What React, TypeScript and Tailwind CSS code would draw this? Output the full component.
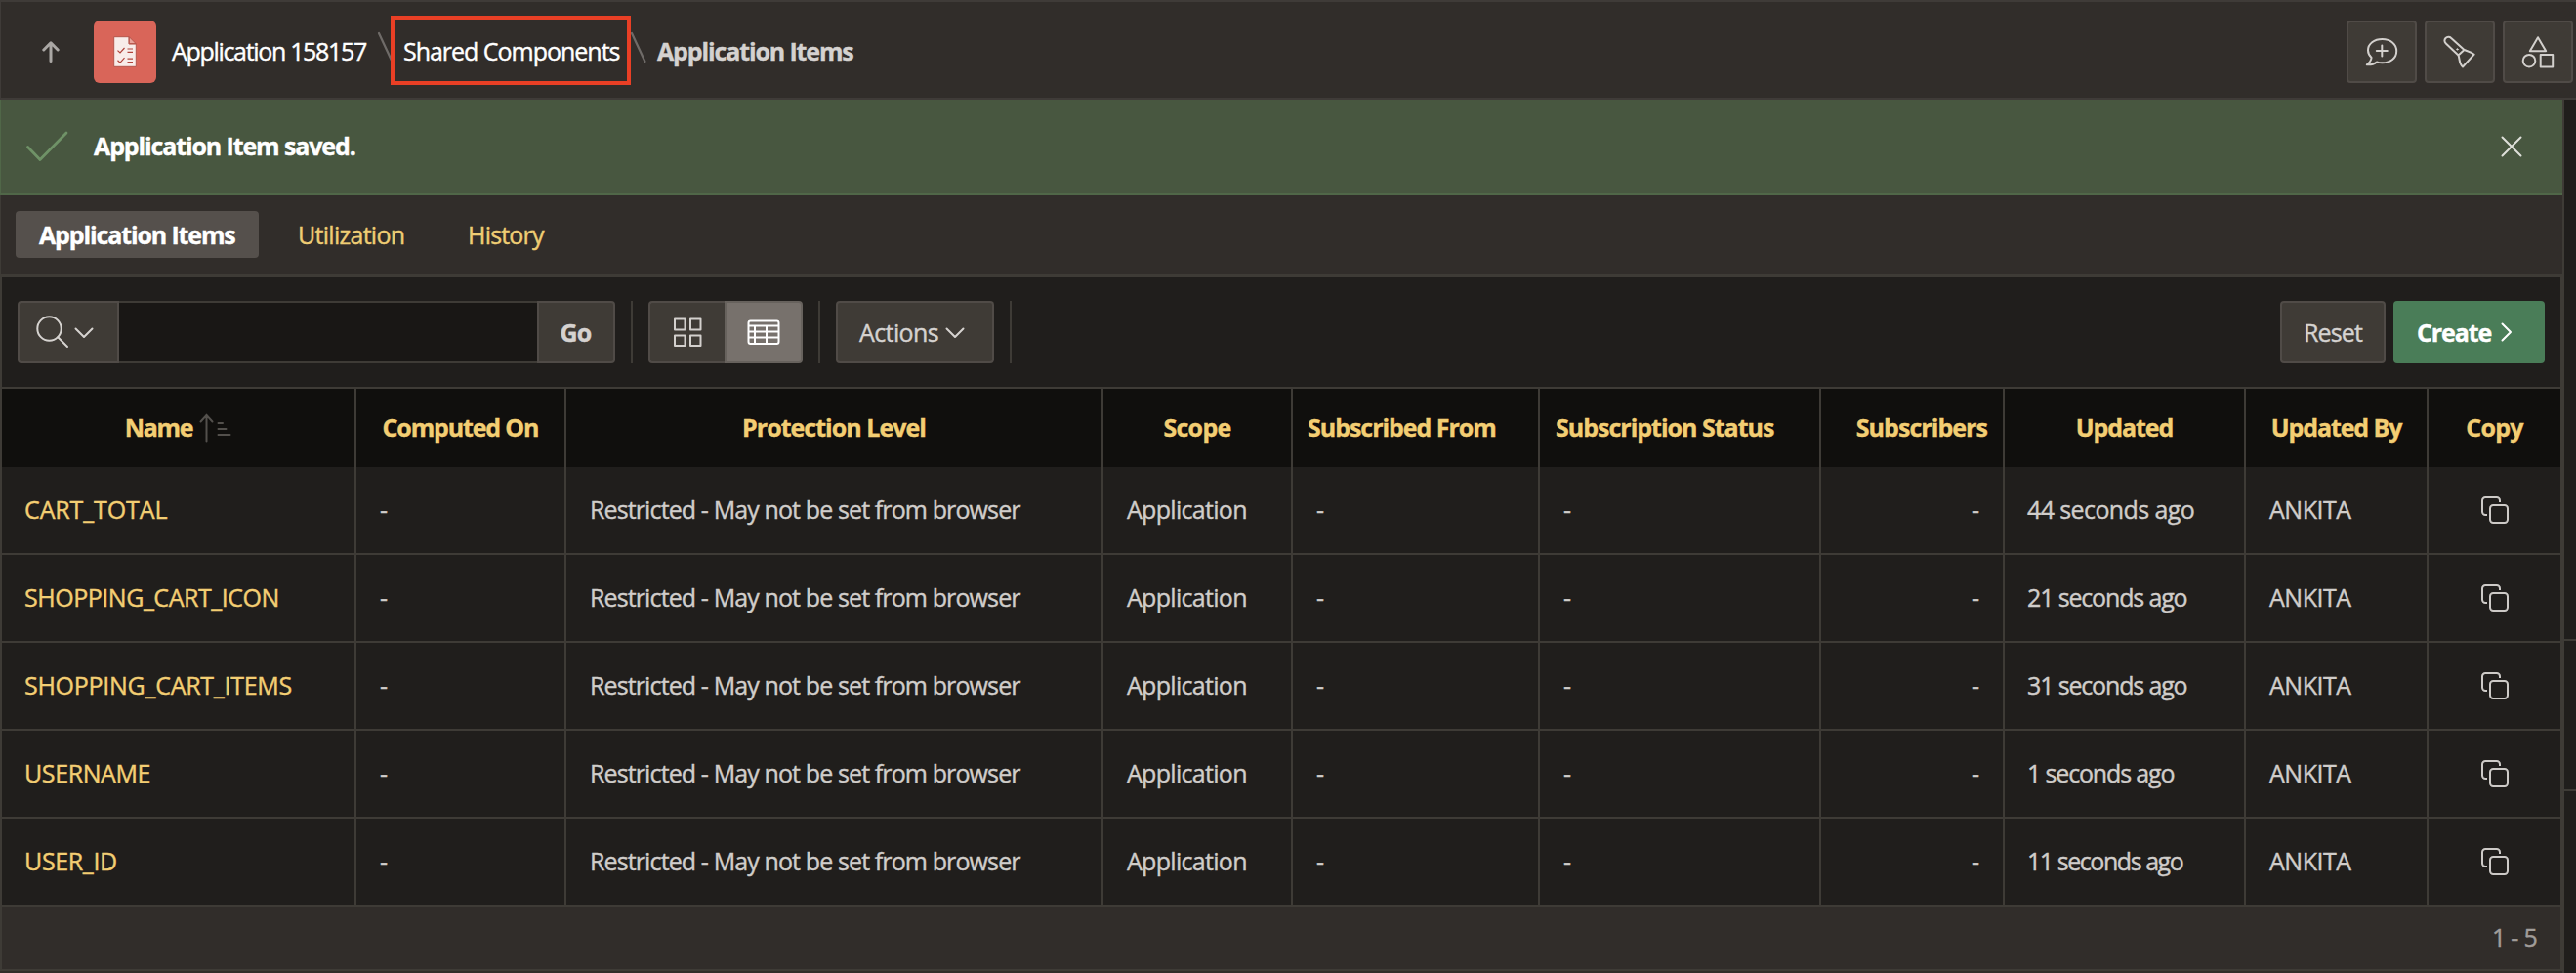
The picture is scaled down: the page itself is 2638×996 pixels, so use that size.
import type { ReactNode } from "react";

const columns = [
  { label: "Name", cls: "w-[363px] justify-center", track: "tracking-[-1.35px]", border: true },
  { label: "Computed On", cls: "w-[215px] justify-center", track: "tracking-[-1.15px]", border: true },
  { label: "Protection Level", cls: "w-[550px] justify-center", track: "tracking-[-0.97px]", border: true },
  { label: "Scope", cls: "w-[194px] justify-center", track: "tracking-[-0.7px]", border: true },
  { label: "Subscribed From", cls: "w-[253px] justify-start pl-[15px]", track: "tracking-[-1.03px]", border: true },
  { label: "Subscription Status", cls: "w-[288px] justify-start pl-[16px]", track: "tracking-[-1px]", border: true },
  { label: "Subscribers", cls: "w-[188px] justify-end pr-[16px]", track: "tracking-[-0.95px]", border: true },
  { label: "Updated", cls: "w-[247px] justify-center", track: "tracking-[-1.05px]", border: true },
  { label: "Updated By", cls: "w-[187px] justify-center", track: "tracking-[-1.1px]", border: true },
  { label: "Copy", cls: "w-[135px] justify-center", track: "tracking-[-0.7px]", border: false },
];

const rows = [
  { name: "CART_TOTAL", nameTrack: "tracking-[-0.12px]", updated: "44 seconds ago", updTrack: "tracking-[-0.6px]" },
  { name: "SHOPPING_CART_ICON", nameTrack: "tracking-[-0.47px]", updated: "21 seconds ago", updTrack: "tracking-[-1.15px]" },
  { name: "SHOPPING_CART_ITEMS", nameTrack: "tracking-[-0.27px]", updated: "31 seconds ago", updTrack: "tracking-[-1.15px]" },
  { name: "USERNAME", nameTrack: "tracking-[-0.4px]", updated: "1 seconds ago", updTrack: "tracking-[-1.15px]" },
  { name: "USER_ID", nameTrack: "tracking-[-0.35px]", updated: "11 seconds ago", updTrack: "tracking-[-1.45px]" },
];

function Slash() {
  return (
    <svg className="mb-1.5 w-[18px] shrink-0" width="18" height="34" viewBox="0 0 18 34" fill="none" stroke="#6f6b68" strokeWidth="2.2" strokeLinecap="round">
      <path d="M2 2L15.5 31" />
    </svg>
  );
}

function Chevron({ className }: { className?: string }) {
  return (
    <svg className={className} width="20" height="12" viewBox="0 0 20 12" fill="none" stroke="#d6d3d0" strokeWidth="2" strokeLinecap="round" strokeLinejoin="round">
      <path d="M1.5 1.5L10 10L18.5 1.5" />
    </svg>
  );
}

function CopyIcon() {
  return (
    <svg width="30" height="30" viewBox="0 0 30 30" fill="none" stroke="#cdcac7" strokeWidth="2">
      <rect x="10" y="10" width="18" height="18" rx="3.2" />
      <path d="M20 7V5.2A3.2 3.2 0 0 0 16.8 2H5.2A3.2 3.2 0 0 0 2 5.2V16.8A3.2 3.2 0 0 0 5.2 20H7" />
    </svg>
  );
}

function Cell({ w, children, end, last }: { w: string; children: ReactNode; end?: boolean; last?: boolean }) {
  return (
    <div className={`flex shrink-0 items-center border-[#3e3b36] ${w} ${last ? "justify-center" : "border-r-2 px-6 pb-0.5"} ${end ? "justify-end" : ""}`}>
      {children}
    </div>
  );
}

function ToolButton({ children }: { children: ReactNode }) {
  return (
    <button className="flex h-16 w-[72px] items-center justify-center rounded-[4px] border-2 border-[#504b47] bg-[#3f3b36]">
      {children}
    </button>
  );
}

function Header() {
  return (
    <header className="flex h-[102px] items-center border-y-2 border-l border-[#3f3b38] bg-[#312d2a] pt-1 pr-[3px]">
      <svg className="ml-[42px]" width="18" height="24" viewBox="0 0 18 24" fill="none" stroke="#aaa7a4" strokeWidth="3" strokeLinecap="round" strokeLinejoin="round">
        <path d="M9 21.5V3M1.8 10L9 2.8L16.2 10" />
      </svg>
      <div className="ml-[35px] flex size-16 items-center justify-center rounded-md bg-[#d96559]">
        <svg width="24" height="32" viewBox="0 0 24 32" fill="none">
          <path d="M.7 .7H16V8H23.3V31.3H.7Z" fill="#f8ece9" stroke="#b5554b" strokeWidth="1" />
          <path d="M16.3 .7V7.6H23.2Z" fill="#e9a49b" stroke="#b5554b" strokeWidth="1" />
          <path d="M4.5 14.6L7 17L11.5 12M4.5 24.8L7 27.2L11.5 22.2M14.5 13H20M14.5 16.3H20M14.5 23.2H20M14.5 26.5H20" stroke="#b0453c" strokeWidth="1.2" />
        </svg>
      </div>
      <nav className="relative ml-4 flex items-center pb-[3px] whitespace-nowrap">
        <span className="w-[210px] tracking-[-1.32px] text-white">Application 158157</span>
        <Slash />
        <span className="ml-[9px] w-[232px] tracking-[-1.02px] text-white">Shared Components</span>
        <Slash />
        <span className="ml-[10px] font-bold tracking-[-1.13px] text-[#d5d2d0]">Application Items</span>
        <div className="absolute top-[-16px] left-[224px] h-[71px] w-[246px] border-4 border-[#e93f25]" />
      </nav>
      <div className="ml-auto flex gap-2">
        <ToolButton>
          <svg width="34" height="34" viewBox="0 0 34 34" fill="none" stroke="#d3d0cd" strokeWidth="2" strokeLinecap="round" strokeLinejoin="round">
            <path d="M6.6 22.9C4.2 20.7 3 18.2 3 15.5C3 8.9 9.2 4.1 17.6 4.1S32.2 8.9 32.2 16.2S26 28.3 17.6 28.3C15.6 28.3 13.7 28 12 27.4C9 29.9 5.6 30.6 1.8 30.3C4.2 28.6 6.2 25.9 6.6 22.9Z" />
            <path d="M17.3 10.5V21.5M11.8 16H22.8" />
          </svg>
        </ToolButton>
        <ToolButton>
          <svg width="34" height="34" viewBox="0 0 34 34" fill="none" stroke="#d3d0cd" strokeWidth="2" strokeLinecap="round" strokeLinejoin="round">
            <path d="M15.5 20.5L2.8 8.5C1 6.8 1 4.5 2.5 3S6.5 1.3 8.2 3L21.5 15C24.5 16.5 28 16.5 31.7 19.7L20 32.5C16 29 17 24 15.5 20.5L21.5 15" />
            <circle cx="14.4" cy="14.4" r="0.7" fill="#d3d0cd" strokeWidth="1" />
          </svg>
        </ToolButton>
        <ToolButton>
          <svg width="34" height="34" viewBox="0 0 34 34" fill="none" stroke="#d3d0cd" strokeWidth="2" strokeLinejoin="round">
            <path d="M17 2.2L25.2 16.2H8.8Z" />
            <circle cx="8" cy="26.2" r="6.3" />
            <path d="M19.7 20H32.2V32.5H19.7Z" />
          </svg>
        </ToolButton>
      </div>
    </header>
  );
}

function Toolbar() {
  return (
    <div className="flex h-[114px] items-center border-b-2 border-[#3e3b36] bg-[#201e1c] px-4">
      <div className="flex h-16 w-[612px]">
        <button className="flex w-[104px] shrink-0 items-center rounded-l-[4px] border-2 border-[#504b47] bg-[#3f3b36] pl-[17px]">
          <svg width="34" height="34" viewBox="0 0 34 34" fill="none" stroke="#d6d3d0" strokeWidth="2" strokeLinecap="round">
            <circle cx="13.5" cy="13.5" r="12.2" />
            <path d="M22.3 22.3L32 32" />
          </svg>
          <Chevron className="mt-0.5 ml-[5px]" />
        </button>
        <div className="w-[428px] border-y-2 border-[#3e3b36] bg-[#191715]" />
        <button className="flex w-[80px] items-center justify-center rounded-r-[4px] border-2 border-[#504b47] bg-[#3f3b36] pr-px pb-px font-bold tracking-[-0.8px] text-[#d5d2d0]">
          Go
        </button>
      </div>
      <div className="ml-4 h-16 w-0.5 bg-[#3e3b36]" />
      <div className="ml-4 flex h-16">
        <button className="flex w-[78px] items-center justify-center rounded-l-[4px] border-2 border-r-0 border-[#504b47] bg-[#3f3b36] pr-px">
          <svg width="30" height="30" viewBox="0 0 30 30" fill="none" stroke="#d3d0cd" strokeWidth="2" strokeLinejoin="round">
            <path d="M2 1.5H12.5V12.5H2ZM18 1.5H28.5V12.5H18ZM2 18.5H12.5V29H2ZM18 18.5H28.5V29H18Z" />
          </svg>
        </button>
        <button className="flex w-[80px] items-center justify-center rounded-r-[4px] border-2 border-[#67625d] bg-[#77716c]">
          <svg width="34" height="26" viewBox="0 0 34 26" fill="none" stroke="#ffffff" strokeWidth="2">
            <rect x="1.5" y="1.5" width="31" height="23.5" rx="2" />
            <path d="M1.5 6.5H32.5M1.5 12.5H32.5M1.5 18.5H32.5M8 6.5V25M20 6.5V25" />
          </svg>
        </button>
      </div>
      <div className="ml-4 h-16 w-0.5 bg-[#3e3b36]" />
      <button className="ml-4 flex h-16 w-[162px] items-center rounded-[4px] border-2 border-[#504b47] bg-[#3f3b36] pl-[22px] text-[#d5d2d0]">
        <span className="w-[88px] pb-px text-left tracking-[-0.6px]">Actions</span>
        <Chevron className="mt-0.5" />
      </button>
      <div className="ml-4 h-16 w-0.5 bg-[#3e3b36]" />
      <button className="ml-auto flex h-16 w-[108px] items-center justify-center rounded-[4px] border-2 border-[#504b47] bg-[#3f3b36] pb-px tracking-[-0.9px] text-[#d5d2d0]">
        Reset
      </button>
      <button className="ml-2 flex h-16 w-[155px] items-center rounded-[4px] bg-[#4a7d58] pl-6 font-bold tracking-[-1.1px] text-white">
        <span className="pb-px">Create</span>
        <svg className="ml-[10px]" width="12" height="20" viewBox="0 0 12 20" fill="none" stroke="#ffffff" strokeWidth="2" strokeLinecap="round" strokeLinejoin="round">
          <path d="M1.5 1.5L10 10L1.5 18.5" />
        </svg>
      </button>
    </div>
  );
}

export default function App() {
  return (
    <div className="flex h-[996px] w-[2638px] flex-col overflow-hidden bg-[#312d2a] font-['Open_Sans','Noto_Sans',sans-serif] text-[25px] leading-[34px] [-webkit-text-stroke:0.4px]">
      <Header />
      <div className="flex flex-1">
        <main className="flex w-[2626px] shrink-0 flex-col border-r-2 border-[#3e3b36]">
          <div className="flex h-[98px] items-center border-b-2 border-l border-[#506748] bg-[#485740] pr-[41px] pl-[25px]">
            <svg width="44" height="32" viewBox="0 0 44 32" fill="none" stroke="#6f9267" strokeWidth="2.8" strokeLinecap="round" strokeLinejoin="round">
              <path d="M2.5 16.5L15 29.5L42 2" />
            </svg>
            <span className="ml-[26px] pb-0.5 font-bold tracking-[-1.12px] text-white">Application Item saved.</span>
            <svg className="ml-auto" width="22" height="22" viewBox="0 0 22 22" fill="none" stroke="#dfe0da" strokeWidth="2" strokeLinecap="round">
              <path d="M1.5 1.5L20.5 20.5M20.5 1.5L1.5 20.5" />
            </svg>
          </div>
          <nav className="flex h-[84px] shrink-0 items-center border-b-4 border-l border-[#3e3b36] bg-[#312d2a] pl-[15px]">
            <div className="flex h-12 w-[249px] items-center rounded-[4px] bg-[#55504c] pb-px pl-6 font-bold tracking-[-1.13px] whitespace-nowrap text-white">
              Application Items
            </div>
            <a className="ml-[40px] w-[174px] pb-px tracking-[-0.72px] text-[#efcd74]">Utilization</a>
            <a className="pb-px tracking-[-0.8px] text-[#efcd74]">History</a>
          </nav>
          <section className="flex flex-col border-x-2 border-[#3e3b36]">
            <Toolbar />
            <div className="flex h-20 bg-[#100f0d]">
              {columns.map((c) => (
                <div
                  key={c.label}
                  className={`flex shrink-0 items-center border-[#3e3b36] pb-0.5 font-bold whitespace-nowrap text-[#f3ce73] ${c.cls} ${c.track} ${c.border ? "border-r-2" : ""}`}
                >
                  {c.label}
                  {c.label === "Name" && (
                    <svg className="mt-0.5 ml-[7px]" width="33" height="30" viewBox="0 0 33 30" fill="none" stroke="#53504c" strokeWidth="2" strokeLinecap="round" strokeLinejoin="round">
                      <path d="M7.5 28.5V1.8M1.5 8.5L7.5 1.8L13.5 8.5M19.5 10H24M19.5 16H27.5M19.5 22H31.5" />
                    </svg>
                  )}
                </div>
              ))}
            </div>
            {rows.map((r) => (
              <div key={r.name} className="flex h-[90px] border-b-2 border-[#3e3b36] bg-[#201e1c] whitespace-nowrap text-[#d0cdca]">
                <Cell w="w-[363px]"><a className={`-ml-px text-[#f3ce73] ${r.nameTrack}`}>{r.name}</a></Cell>
                <Cell w="w-[215px]">-</Cell>
                <Cell w="w-[550px]"><span className="tracking-[-0.88px]">Restricted - May not be set from browser</span></Cell>
                <Cell w="w-[194px]"><span className="tracking-[-0.7px]">Application</span></Cell>
                <Cell w="w-[253px]">-</Cell>
                <Cell w="w-[288px]">-</Cell>
                <Cell w="w-[188px]" end>-</Cell>
                <Cell w="w-[247px]"><span className={`-ml-px ${r.updTrack}`}>{r.updated}</span></Cell>
                <Cell w="w-[187px]"><span className="tracking-[-0.5px]">ANKITA</span></Cell>
                <Cell w="w-[135px]" last><CopyIcon /></Cell>
              </div>
            ))}
            <div className="flex h-[66px] items-center justify-end border-b-2 border-[#3e3b36] bg-[#312d2a] pr-6 pb-0.5 tracking-[-0.7px] text-[#a19d9a]">
              1 - 5
            </div>
          </section>
        </main>
        <aside className="flex flex-1 flex-col bg-[#201e1c]">
          <div className="h-[554px] border-b-2 border-[#3e3b36]" />
          <div className="h-[154px] border-b-2 border-[#3e3b36]" />
        </aside>
      </div>
    </div>
  );
}
